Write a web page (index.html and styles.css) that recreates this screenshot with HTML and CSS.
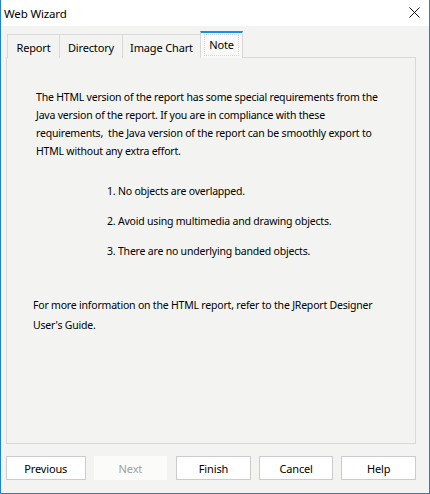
FILE: index.html
```html
<!DOCTYPE html>
<html>
<head>
<meta charset="utf-8">
<link rel="stylesheet" href="styles.css">
</head>
<body>
<div class="window">
  <div class="titlebar">
    <span class="title">Web Wizard</span>
    <svg class="close" width="11" height="11" viewBox="0 0 11 11"><path d="M0.5 0.5 L10.5 10.5 M10.5 0.5 L0.5 10.5" stroke="#111" stroke-width="1" fill="none"/></svg>
  </div>
  <div class="body">
    <div class="tabs">
      <div class="tab t-report">Report</div>
      <div class="tab t-dir">Directory</div>
      <div class="tab t-chart">Image Chart</div>
      <div class="tab active"><span class="focus">Note</span></div>
    </div>
    <div class="panel">
      <p class="intro">The HTML version of the report has some special requirements from the<br>Java version of the report. If you are in compliance with these<br>requirements,&nbsp; the Java version of the report can be smoothly export to<br>HTML without any extra effort.</p>
      <ol class="rules">
        <li>1. No objects are overlapped.</li>
        <li>2. Avoid using multimedia and drawing objects.</li>
        <li>3. There are no underlying banded objects.</li>
      </ol>
      <p class="more">For more information on the HTML report, refer to the JReport Designer<br>User's Guide.</p>
    </div>
    <div class="buttons">
      <div class="btn w80">Previous</div>
      <div class="btn w74 disabled">Next</div>
      <div class="btn w75">Finish</div>
      <div class="btn w75">Cancel</div>
      <div class="btn w75">Help</div>
    </div>
  </div>
</div>
</body>
</html>
```
FILE: styles.css
```css
* { box-sizing: border-box; }
html, body { margin: 0; padding: 0; }
body {
  font-family: "Noto Sans", "DejaVu Sans", sans-serif;
  font-size: 11px;
  letter-spacing: -0.15px;
  color: #000;
  background: #f3f4f2;
}
.window {
  width: 430px;
  height: 494px;
  border: 1px solid #1883d7;
  border-top: none;
  background: #f3f4f2;
  display: flex;
  flex-direction: column;
}
.titlebar {
  height: 26px;
  background: #fff;
  display: flex;
  align-items: center;
  justify-content: space-between;
  padding: 0 9px 0 3px;
}
.title {
  font-size: 11.5px;
  color: #000;
}
.close { display: block; margin-top: -2px; }
.body {
  flex: 1;
  display: flex;
  flex-direction: column;
  padding: 6px 13px 0 5px;
}
.tabs {
  display: flex;
  align-items: flex-end;
  height: 26px;
  padding-left: 1px;
  margin-bottom: -1px;
  position: relative;
  z-index: 1;
}
.tab {
  height: 24px;
  border: 1px solid #d9d9d9;
  border-bottom: none;
  border-right: none;
  display: flex;
  align-items: center;
  justify-content: center;
  background: #f3f4f2;
  color: #000;
  line-height: 1;
  padding-top: 1px;
}
.t-report { width: 52px; }
.t-dir { width: 63px; }
.t-chart { width: 79px; border-right: 1px solid #d9d9d9; }
.tab.active {
  width: 43px;
  height: 27px;
  border: 1px solid #d9d9d9;
  border-bottom: none;
  border-top: 2px solid #1a8ee2;
  border-left: 1px solid #d9d9d9;
  background: #f9faf8;
  margin-left: -1px;
  align-items: flex-start;
  padding-top: 1px;
}
.focus {
  display: block;
  padding: 3px 4px 4px;
  border: 1px dotted #c8d8ea;
  line-height: 13px;
}
.panel {
  height: 387px;
  border: 1px solid #d9d9d9;
  background: #f3f4f2;
  padding: 0 0 0 28px;
  white-space: nowrap;
  font-size: 10.5px;
  letter-spacing: -0.2px;
}
.intro {
  margin: 30px 0 0 1px;
  line-height: 18px;
}
.rules {
  list-style: none;
  margin: 22px 0 0 72px;
  padding: 0;
  line-height: 18px;
}
.rules li { margin-bottom: 12px; }
.more {
  margin: 35px 0 0 -2px;
  line-height: 20px;
}
.buttons {
  display: flex;
  margin-top: 12px;
}
.btn {
  height: 24px;
  border: 1px solid #cccccc;
  background: #fff;
  display: flex;
  align-items: center;
  justify-content: center;
  margin-right: 8px;
}
.w80 { width: 80px; margin-right: 8px; }
.w74 { width: 74px; margin-right: 9px; }
.w75 { width: 75px; }
.btn.disabled {
  border-color: #fbfcfa;
  background: #fbfcfa;
  color: #a0a0a0;
}
.btn:last-child { margin-right: 0; }
```
